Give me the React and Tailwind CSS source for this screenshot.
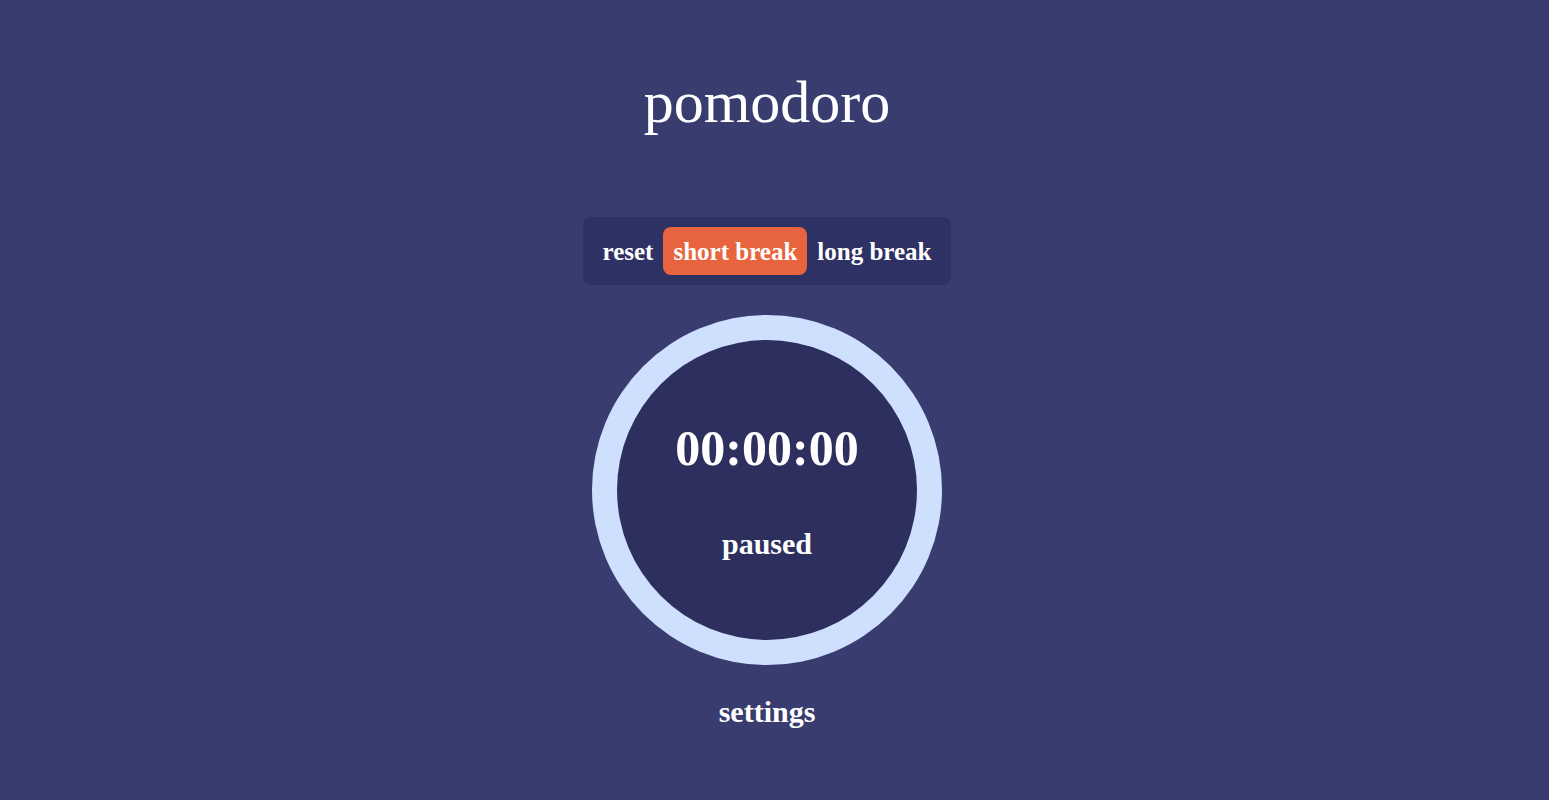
import React, { useState } from 'react';

const modes = ['reset', 'short break', 'long break'];

const App = () => {
    const [active, setActive] = useState('short break');

    return (
        <div
            className="min-h-screen w-full bg-[#383c6f] flex flex-col items-center text-white pt-[68px] pr-[15px]"
            style={{ fontFamily: '"Liberation Serif", "Times New Roman", serif' }}
        >
            <h1 className="text-[60px] leading-[69px] font-normal">pomodoro</h1>

            {/* Mode switcher */}
            <div className="mt-[80px] flex items-center p-[10px] rounded-lg bg-[#2e3163]">
                {modes.map((m) => (
                    <button
                        key={m}
                        onClick={() => setActive(m)}
                        className={`h-[48px] px-[10px] rounded-lg text-[25px] font-bold leading-none text-white ${
                            active === m ? 'bg-[#e8643e]' : ''
                        }`}
                    >
                        {m}
                    </button>
                ))}
            </div>

            {/* Timer ring */}
            <div className="mt-[30px] w-[350px] h-[350px] rounded-full bg-[#cfdffe] flex items-center justify-center">
                <div className="w-[300px] h-[300px] rounded-full bg-[#2d2f5f] flex flex-col items-center pt-[83px]">
                    <div className="text-[50px] leading-[50px] font-bold">00:00:00</div>
                    <div className="mt-[56px] text-[30px] leading-[30px] font-bold">paused</div>
                </div>
            </div>

            <button className="mt-[32px] text-[30px] leading-[30px] font-bold text-white">settings</button>
        </div>
    );
};

export default App;
